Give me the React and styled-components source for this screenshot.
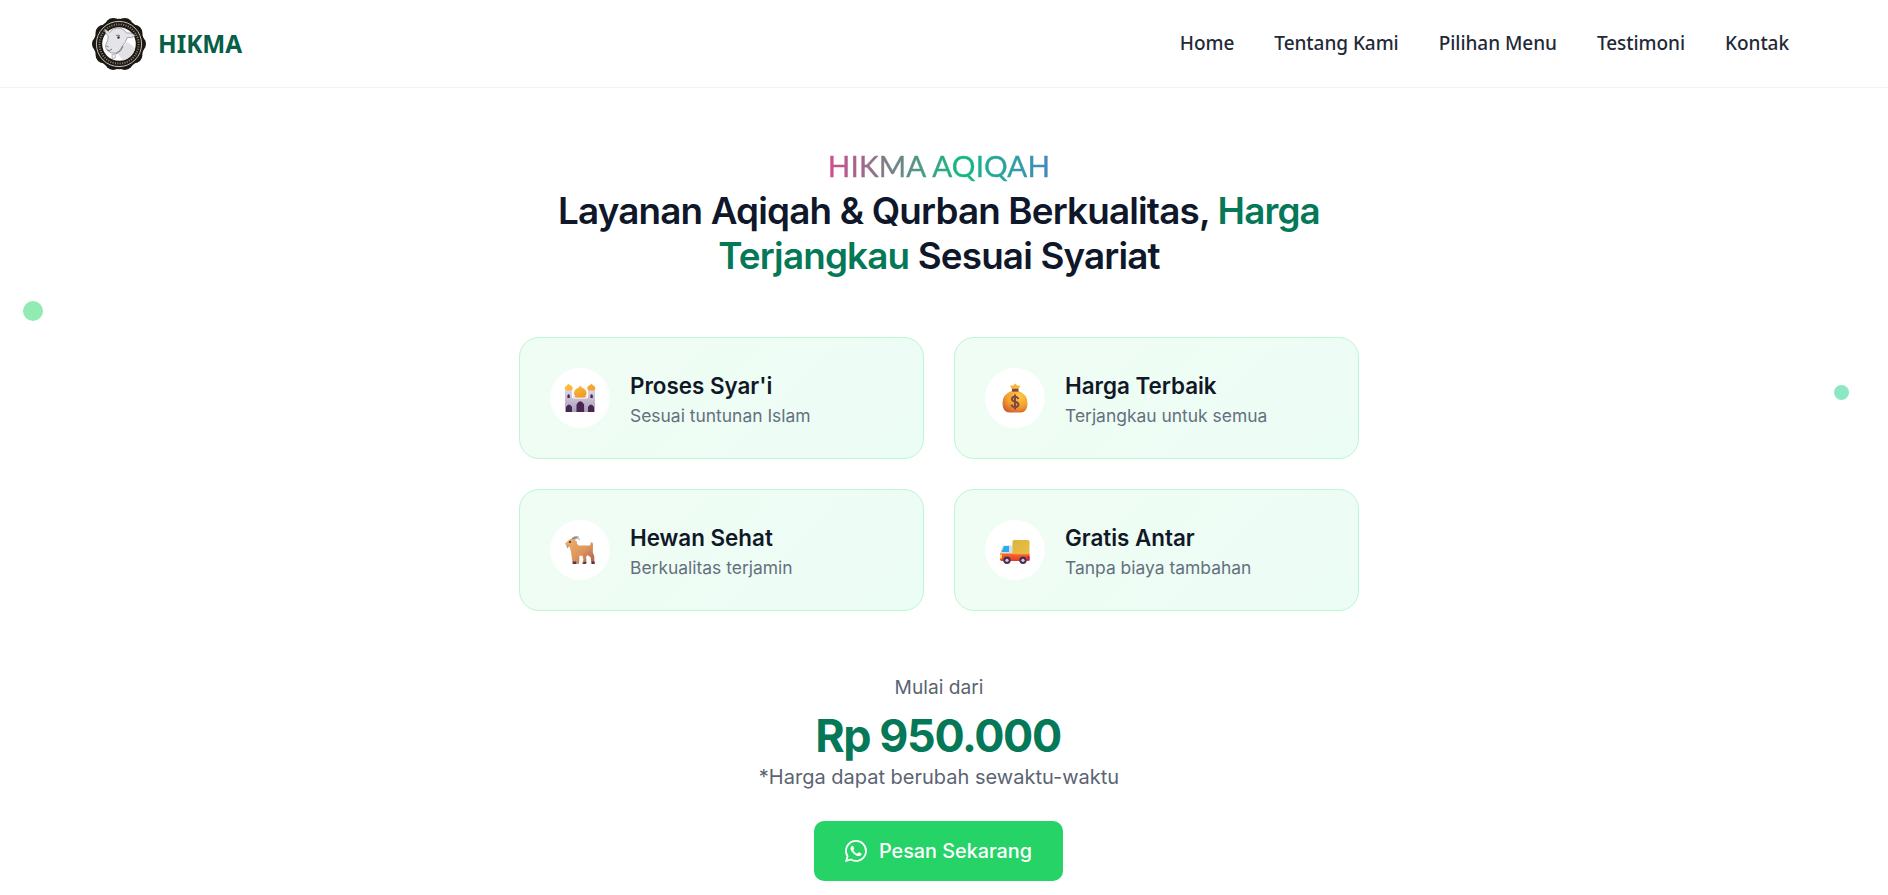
import React from "react";
import styled, { createGlobalStyle } from "styled-components";
import { BsWhatsapp } from "react-icons/bs";

const GlobalStyle = createGlobalStyle`
  * { box-sizing: border-box; }
  body {
    margin: 0;
    background: #fff;
    font-family: Inter, "Liberation Sans", sans-serif;
    color: #0f172a;
  }
  h1, h2, h3, p { margin: 0; }
`;

const Page = styled.div`
  position: relative;
  min-height: 895px;
  overflow: hidden;
`;

const Header = styled.header`
  display: flex;
  align-items: center;
  justify-content: space-between;
  height: 88px;
  padding: 0 99px 0 90px;
  border-bottom: 1px solid #f1f2f4;
  font-family: "Noto Sans", "Open Sans", sans-serif;
`;

const Brand = styled.a`
  display: flex;
  align-items: center;
  gap: 10px;
`;

const BrandName = styled.span`
  color: #065f46;
  font-size: 24.4px;
  font-weight: 700;
  line-height: 34px;
`;

const Nav = styled.nav`
  display: flex;
  gap: 40px;
  padding-bottom: 2px;
`;

const NavLink = styled.a`
  color: #1f2937;
  font-size: 19px;
  font-weight: 500;
  line-height: 28px;
  letter-spacing: -0.05px;
  white-space: nowrap;
`;

const Hero = styled.main`
  display: flex;
  flex-direction: column;
  align-items: center;
  width: 840px;
  margin: 58px auto 0;
  transform: translateX(-5px);
  text-align: center;
`;

const Eyebrow = styled.h2`
  font-family: Lato, Inter, sans-serif;
  font-size: 29.5px;
  font-weight: 400;
  line-height: 40px;
  letter-spacing: 0.2px;
  white-space: nowrap;
  background: linear-gradient(90deg, #d14d8f 0%, #10b981 60%, #4b83c4 105%);
  -webkit-background-clip: text;
  background-clip: text;
  color: transparent;
  -webkit-text-stroke: 0.4px transparent;
`;

const Title = styled.h1`
  width: 800px;
  padding-top: 2px;
  font-size: 36.8px;
  font-weight: 600;
  line-height: 45px;
  letter-spacing: -0.82px;
`;

const Accent = styled.span`
  color: #047857;
`;

const Features = styled.section`
  display: grid;
  grid-template-columns: repeat(2, 405px);
  gap: 30px;
  margin-top: 59px;
`;

const Card = styled.article`
  display: flex;
  align-items: center;
  gap: 20px;
  height: 122px;
  padding: 0 30px;
  border: 1px solid #bbf7d0;
  border-radius: 20px;
  background: linear-gradient(135deg, #f0fdf4, #ecfdf5);
  text-align: left;
`;

const CardBody = styled.div`
  padding-top: 4px;
`;

const IconDisc = styled.div`
  display: flex;
  flex: none;
  align-items: center;
  justify-content: center;
  width: 60px;
  height: 60px;
  border-radius: 50%;
  background: #fff;
`;

const CardTitle = styled.h3`
  color: #111827;
  font-size: 22.4px;
  font-weight: 600;
  line-height: 30px;
`;

const CardText = styled.p`
  color: #64707d;
  font-size: 17.45px;
  line-height: 29px;
  white-space: nowrap;
`;

const Pricing = styled.section`
  display: flex;
  flex-direction: column;
  align-items: center;
  margin-top: 60px;
  color: #5b6472;
`;

const PriceNote = styled.p`
  font-size: ${(p) => p.$size}px;
  line-height: 32px;
  white-space: nowrap;
`;

const Price = styled.p`
  padding: 9px 2px 0 0;
  color: #047857;
  font-size: 44.8px;
  font-weight: 700;
  line-height: 49px;
  letter-spacing: -1.35px;
`;

const OrderButton = styled.button`
  display: flex;
  align-items: center;
  justify-content: center;
  gap: 12px;
  width: 249px;
  height: 60px;
  margin: 28px 1px 0 0;
  padding: 0;
  border: 0;
  border-radius: 10px;
  background: #25d366;
  color: #fff;
  font: 500 19.8px/30px Inter, sans-serif;
`;

const Dot = styled.span`
  position: absolute;
  left: ${(p) => p.$x}px;
  top: ${(p) => p.$y}px;
  width: ${(p) => p.$size}px;
  height: ${(p) => p.$size}px;
  border-radius: 50%;
  background: ${(p) => p.$color};
`;

function SheepSeal() {
  const lobes = Array.from({ length: 10 }, (_, i) => {
    const a = (i * Math.PI) / 5;
    return <circle key={i} cx={29 + 18.5 * Math.cos(a)} cy={29 + 18.5 * Math.sin(a)} r="8.5" />;
  });
  return (
    <svg width="58" height="58" viewBox="0 0 58 58">
      <g fill="#1c1710">
        {lobes}
        <circle cx="29" cy="29" r="25.200" />
      </g>
      <circle cx="29" cy="29" r="22.600" fill="none" stroke="#d9d6cf" strokeWidth="0.9" />
      <circle cx="29" cy="29" r="19.600" fill="none" stroke="#857f75" strokeWidth="2" strokeDasharray="1.100 1.300" />
      <circle cx="29" cy="29" r="16.800" fill="#fdfdfd" />
      <path d="M27 38l10-11q5.500 3 8.200 6.500q-2.500 9-12 12z" fill="#e2e2e6" />
      <path d="M14.500 14q2.500 1 5 3.500q3.500-4.500 8-4.500q6 0 9 5q5-1 8.800 2.500q-3.500 3-8 2q-1.500 5-5 8.500q-2 5.500-6.500 7q-5 1-8.500-2.500q-2.500-2.500-1.500-6q2.500-4 2.500-8.500q-3.300-2.500-3.800-7z" fill="#e4e4e9" stroke="#85858c" strokeWidth="0.700" />
      <path d="M26 20.500q2-1 4 .3M16.500 31l2 1M17 35q3 1.500 5-1M33 31q-1 5-7 8" fill="none" stroke="#65656c" strokeWidth="0.900" />
      <circle cx="28.500" cy="22.500" r="1.200" fill="#33302d" />
      <path d="M22 39.500l3.200-.5v4l-3 .5z" fill="#f6f6f6" stroke="#908c86" strokeWidth="0.600" />
    </svg>
  );
}

function MosqueIcon() {
  return (
    <svg width="32" height="30" viewBox="0 0 32 30">
      <defs>
        <linearGradient id="dome" x1="0" x2="1" y1="0" y2="1">
          <stop stopColor="#ffc64a" />
          <stop offset="1" stopColor="#ed8f1c" />
        </linearGradient>
        <linearGradient id="wall" x1="0" x2="0" y1="0" y2="1">
          <stop stopColor="#ddd5e4" />
          <stop offset="1" stopColor="#a99bb8" />
        </linearGradient>
      </defs>
      <path d="M1 7h7v8h16V7h7v22H1z" fill="url(#wall)" />
      <path d="M9 13h14v3H9z" fill="#e8e1eb" />
      <path d="M4.500.5l1 1.200q3.500 1.500 3.300 4L7.500 7.500h-5.500L.6 5.700q0-2.500 2.900-4zM27.500.5l1 1.200q3 1.500 2.900 4L30 7.500h-5.500L23.200 5.700q-.2-2.500 3.300-4zM16.300 2.500l1.200 1.700q6 3 5 7l-1.800 3.300h-9L10 11q-.8-4 5-6.800z" fill="url(#dome)" />
      <path d="M3.400 15v-2.500q1.200-2.500 2.400 0V15zM26.400 15v-2.500q1.200-2.500 2.400 0V15zM2 29v-5q3-5 6 0v5zM12.500 29v-7.500q3.800-6.500 7.600 0V29zM24 29v-5q3-5 6 0v5z" fill="#482653" />
    </svg>
  );
}

function MoneyBagIcon() {
  return (
    <svg width="28" height="30" viewBox="0 0 28 30">
      <defs>
        <radialGradient id="bag" cx=".65" cy=".25" r=".8">
          <stop stopColor="#ffc849" />
          <stop offset=".6" stopColor="#f2a02e" />
          <stop offset="1" stopColor="#d46132" />
        </radialGradient>
      </defs>
      <path d="M10.500 8h7q9 3.500 9 12q0 9.500-7 9.500h-11q-7 0-7-9.500q0-8.500 9-12z" fill="url(#bag)" />
      <path d="M11 6.500L9 2.200l3 .6L14.200.5l2.300 2.300 3-.3L17.200 6.500z" fill="#fbb33b" />
      <path d="M11 5.800h6.500v2.800H11z" fill="#7c4a42" />
      <path d="M17.300 16q-.6-2.200-3.300-2.200-3 0-3 2.300 0 2 3 2.600 3.500.8 3.500 2.900 0 2.400-3.500 2.400-3 0-3.500-2.400M14 11.500v15" fill="none" stroke="#804840" strokeWidth="2" />
    </svg>
  );
}

function GoatIcon() {
  return (
    <svg width="32" height="30" viewBox="0 0 32 30">
      <defs>
        <linearGradient id="goat" x1="0" x2="1" y1="0" y2="1">
          <stop stopColor="#eeb06c" />
          <stop offset=".55" stopColor="#dd965d" />
          <stop offset="1" stopColor="#a75e51" />
        </linearGradient>
      </defs>
      <path d="M7 4.500q3-5 9-2.200-4-.2-6 3.200z" fill="#8e8c96" />
      <path d="M10 4.500q4-2.500 6 .2" fill="none" stroke="#aaa7b0" strokeWidth="1" />
      <path d="M1 8.500L6 4q4-.8 5.500 1.500 2 .7 1.500 3l1.500 2h11.500l1-3.300q2-.3 2 2l-.2 8 1.500 4v7h-2.800l-1-6-3-2.200-1.500 2.200.5 3-2 3.500h-2.500l1.500-4-1-4h-3l-.5 8h-2.300l-.2-4-.5 4H8.700L7 17l-1.500-5.500L3 12z" fill="url(#goat)" />
      <path d="M2.500 10.500l2.500.5-1.500 2.500z" fill="#9b9099" />
      <path d="M8.700 26.500h3.800V29H8.700zM20 26.800h3L21.700 29h-3zM27.500 26.500h3.200V29h-3.200z" fill="#5c343e" />
      <circle cx="6" cy="7" r="1" fill="#30292f" />
    </svg>
  );
}

function TruckIcon() {
  return (
    <svg width="32" height="30" viewBox="0 0 32 30">
      <defs>
        <linearGradient id="cargo" x1="0" x2="1" y1="0" y2="1">
          <stop stopColor="#ddb53a" />
          <stop offset="1" stopColor="#e9bd4c" />
        </linearGradient>
        <linearGradient id="body" x1="0" x2="0" y1="0" y2="1">
          <stop stopColor="#ff6a25" />
          <stop offset="1" stopColor="#e3382f" />
        </linearGradient>
      </defs>
      <path d="M4 10.500h10v9H1v-2z" fill="#dedbe9" />
      <path d="M5 11h5v6H2.500z" fill="#27ace8" />
      <path d="M1 18.500h29.500V26H2q-1-1-1-2z" fill="url(#body)" />
      <rect x="13.500" y="5" width="17" height="14.300" rx="1.500" fill="url(#cargo)" />
      <path d="M1 19.500h2v4H1z" fill="#ffe14f" />
      <path d="M28.500 21h2v4h-2z" fill="#c61d54" />
      <circle cx="8" cy="25.300" r="3.700" fill="#46304f" />
      <circle cx="24" cy="25.300" r="3.700" fill="#46304f" />
      <circle cx="8" cy="25.300" r="1.600" fill="#d8cddf" />
      <circle cx="24" cy="25.300" r="1.600" fill="#d8cddf" />
    </svg>
  );
}

const links = ["Home", "Tentang Kami", "Pilihan Menu", "Testimoni", "Kontak"];

const features = [
  { icon: <MosqueIcon />, title: "Proses Syar'i", text: "Sesuai tuntunan Islam" },
  { icon: <MoneyBagIcon />, title: "Harga Terbaik", text: "Terjangkau untuk semua" },
  { icon: <GoatIcon />, title: "Hewan Sehat", text: "Berkualitas terjamin" },
  { icon: <TruckIcon />, title: "Gratis Antar", text: "Tanpa biaya tambahan" },
];

export default function App() {
  return (
    <Page>
      <GlobalStyle />
      <Header>
        <Brand>
          <SheepSeal />
          <BrandName>HIKMA</BrandName>
        </Brand>
        <Nav>
          {links.map((label) => (
            <NavLink key={label}>{label}</NavLink>
          ))}
        </Nav>
      </Header>
      <Dot $x={23} $y={301} $size={20} $color="#92ebb3" />
      <Dot $x={1834} $y={385} $size={15} $color="#8ce7c4" />
      <Hero>
        <Eyebrow>HIKMA AQIQAH</Eyebrow>
        <Title>
          Layanan Aqiqah &amp; Qurban Berkualitas, <Accent>Harga Terjangkau</Accent> Sesuai Syariat
        </Title>
        <Features>
          {features.map((f) => (
            <Card key={f.title}>
              <IconDisc>{f.icon}</IconDisc>
              <CardBody>
                <CardTitle>{f.title}</CardTitle>
                <CardText>{f.text}</CardText>
              </CardBody>
            </Card>
          ))}
        </Features>
        <Pricing>
          <PriceNote $size={19.2}>Mulai dari</PriceNote>
          <Price>Rp 950.000</Price>
          <PriceNote $size={20}>*Harga dapat berubah sewaktu-waktu</PriceNote>
          <OrderButton>
            <BsWhatsapp size={22} />
            Pesan Sekarang
          </OrderButton>
        </Pricing>
      </Hero>
    </Page>
  );
}
